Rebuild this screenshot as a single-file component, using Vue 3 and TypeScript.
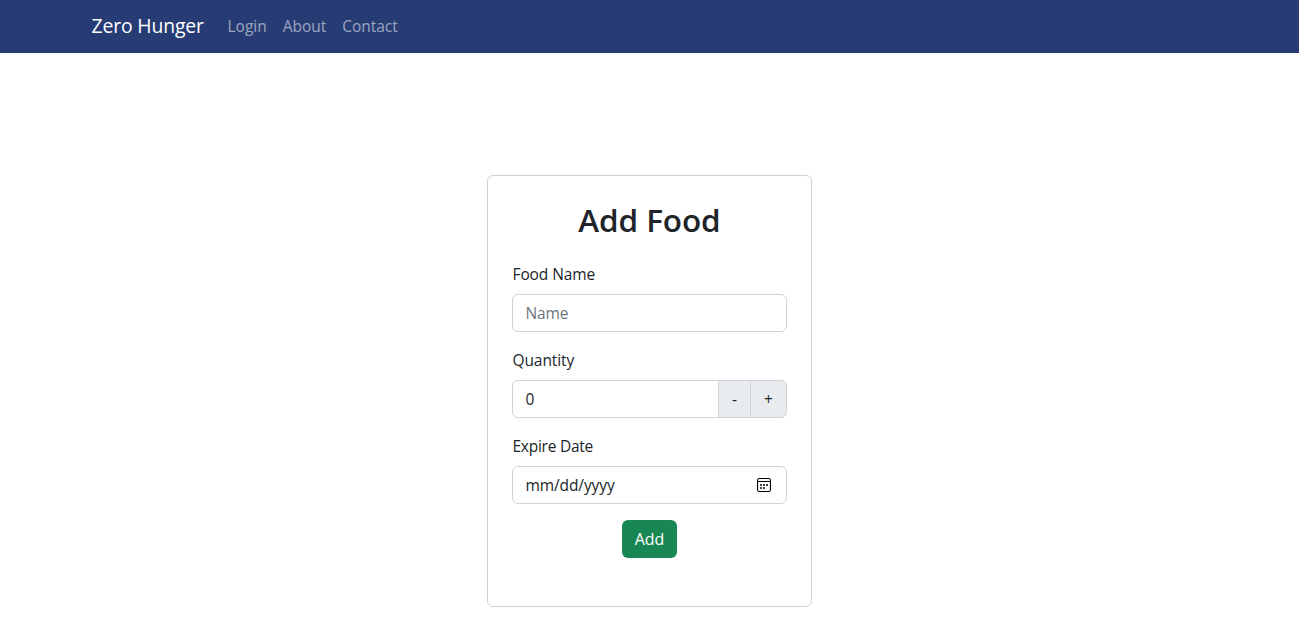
<script setup lang="ts">
import { ref } from 'vue'

const links: string[] = ['Login', 'About', 'Contact']
const name = ref('')
const quantity = ref(0)

function step(delta: number): void {
  quantity.value = Math.max(0, quantity.value + delta)
}
</script>

<template>
  <div class="page">
    <nav class="navbar">
      <a class="brand">Zero Hunger</a>
      <a v-for="l in links" :key="l" class="link">{{ l }}</a>
    </nav>
    <main class="main">
      <form class="card" @submit.prevent>
        <h2 class="title">Add Food</h2>
        <label class="label">Food Name</label>
        <input v-model="name" class="control" type="text" placeholder="Name" />
        <label class="label">Quantity</label>
        <div class="group">
          <div class="control qty">{{ quantity }}</div>
          <button type="button" class="addon minus" @click="step(-1)">-</button>
          <button type="button" class="addon plus" @click="step(1)">+</button>
        </div>
        <label class="label expire">Expire Date</label>
        <div class="control date">
          <span>mm/dd/yyyy</span>
          <svg class="cal" width="14" height="14" viewBox="0 0 14 14">
            <rect x="0.55" y="0.55" width="12.9" height="12.9" rx="1.8" fill="none" stroke="#000" stroke-width="1.1" />
            <path d="M1 3.5H13" stroke="#000" stroke-width="1" />
            <path d="M3 6h2v2H3zM6 6h2v2H6zM9 6h2v2H9zM3 9h2v2H3zM6 9h2v2H6z" fill="#444" />
          </svg>
        </div>
        <button type="submit" class="add">Add</button>
      </form>
    </main>
  </div>
</template>

<style>
body {
  margin: 0;
  background: #fff;
}
</style>

<style scoped>
.page,
.page * {
  box-sizing: border-box;
}
.page {
  height: 637px;
  overflow: hidden;
  font-family: "Segoe UI", "Open Sans", "Noto Sans", sans-serif;
  font-size: 15.5px;
  letter-spacing: -0.1px;
  line-height: 24px;
  color: #212529;
}
.navbar {
  height: 53px;
  background: #273c75;
  padding: 0 0 1px 91.5px;
  display: flex;
  align-items: center;
}
.brand {
  width: 136px;
  font-size: 19.4px;
  letter-spacing: -0.15px;
  color: #fff;
  white-space: nowrap;
}
.link {
  color: rgba(255, 255, 255, 0.55);
  margin-right: 16px;
  letter-spacing: 0;
  white-space: nowrap;
}
.link:nth-child(3) {
  letter-spacing: -0.05px;
}
.main {
  display: flex;
  justify-content: center;
  padding-top: 122px;
}
.card {
  width: 325px;
  height: 432px;
  border: 1px solid #d0d1d3;
  border-radius: 6px;
  padding: 24px;
  display: flex;
  flex-direction: column;
}
.title {
  margin: 0 0 23px;
  font-size: 31.5px;
  line-height: 40px;
  height: 39px;
  font-weight: 600;
  letter-spacing: -0.1px;
  text-align: center;
}
.label {
  margin-bottom: 8px;
  padding-left: 0.5px;
}
.expire {
  letter-spacing: -0.25px;
}
.control {
  width: 275px;
  height: 38px;
  border: 1px solid #ced4da;
  border-radius: 6px;
  padding: 6px 12.5px;
  font: inherit;
  letter-spacing: inherit;
  color: #212529;
  background: #fff;
  outline: none;
  margin-bottom: 16px;
}
.control::placeholder {
  color: #6c757d;
  opacity: 1;
}
.group {
  display: flex;
  margin-bottom: 16px;
}
.qty {
  width: 207px;
  margin: 0;
  border-radius: 6px 0 0 6px;
}
.addon {
  height: 38px;
  margin: 0 0 0 -1px;
  padding: 0;
  border: 1px solid #ced4da;
  background: #e9ecef;
  color: #212529;
  font: inherit;
}
.minus {
  width: 33px;
}
.plus {
  width: 37px;
  border-radius: 0 6px 6px 0;
}
.date {
  display: flex;
  justify-content: space-between;
  align-items: center;
  padding-right: 15px;
}
.add {
  align-self: center;
  width: 55px;
  height: 38px;
  border: 0;
  border-radius: 6px;
  background: #198754;
  color: #fff;
  font: inherit;
  font-size: 16px;
  padding: 0;
}
</style>
